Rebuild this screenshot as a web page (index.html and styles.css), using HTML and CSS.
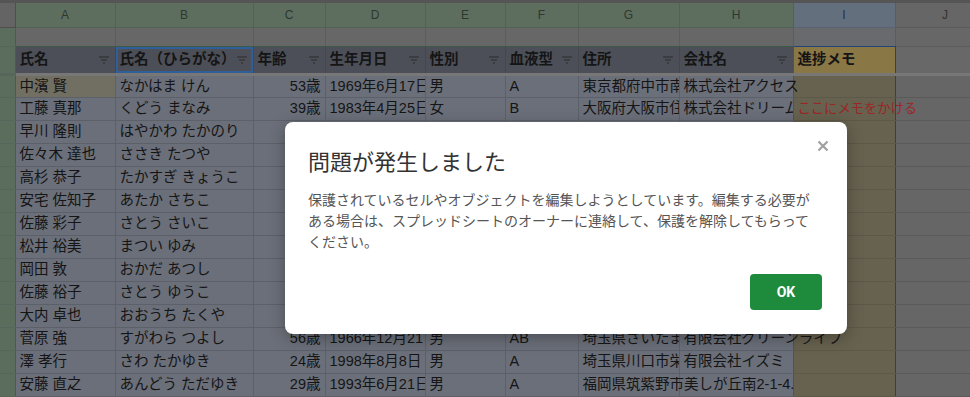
FILE: index.html
```html
<!DOCTYPE html>
<html lang="ja">

<head>
    <meta charset="UTF-8">
    <meta name="viewport" content="width=device-width, initial-scale=1.0">
    <title>顧客リスト</title>
    <link rel="stylesheet" href="styles.css">
</head>

<body>
    <div class="page">
        <table class="sheet">
            <colgroup>
                <col class="w-rh">
                <col class="w-a">
                <col class="w-b">
                <col class="w-c">
                <col class="w-d">
                <col class="w-e">
                <col class="w-f">
                <col class="w-g">
                <col class="w-h">
                <col class="w-i">
                <col class="w-j">
            </colgroup>
            <tr class="letters">
                <td class="corner"></td>
                <td>A</td><td>B</td><td>C</td><td>D</td><td>E</td><td>F</td><td>G</td><td>H</td>
                <td class="sel">I</td>
                <td class="plain">J</td>
            </tr>
            <tr class="blank">
                <td class="rh"></td>
                <td></td><td></td><td></td><td></td><td></td><td></td><td></td><td></td><td></td><td></td>
            </tr>
            <tr class="hdr">
                <td class="rh"></td>
                <td><div class="hc"><span>氏名</span><svg class="flt" viewBox="0 0 12 10"><path d="M1 2h10M3 5h6M5 8h2"/></svg></div></td>
                <td class="cur"><div class="hc"><span>氏名（ひらがな）</span><svg class="flt" viewBox="0 0 12 10"><path d="M1 2h10M3 5h6M5 8h2"/></svg></div></td>
                <td><div class="hc"><span>年齢</span><svg class="flt" viewBox="0 0 12 10"><path d="M1 2h10M3 5h6M5 8h2"/></svg></div></td>
                <td><div class="hc"><span>生年月日</span><svg class="flt" viewBox="0 0 12 10"><path d="M1 2h10M3 5h6M5 8h2"/></svg></div></td>
                <td><div class="hc"><span>性別</span><svg class="flt" viewBox="0 0 12 10"><path d="M1 2h10M3 5h6M5 8h2"/></svg></div></td>
                <td><div class="hc"><span>血液型</span><svg class="flt" viewBox="0 0 12 10"><path d="M1 2h10M3 5h6M5 8h2"/></svg></div></td>
                <td><div class="hc"><span>住所</span><svg class="flt" viewBox="0 0 12 10"><path d="M1 2h10M3 5h6M5 8h2"/></svg></div></td>
                <td><div class="hc"><span>会社名</span><svg class="flt" viewBox="0 0 12 10"><path d="M1 2h10M3 5h6M5 8h2"/></svg></div></td>
                <td class="memo">進捗メモ</td>
                <td class="plain"></td>
            </tr>
            <tr>
                <td class="rh"></td>
                <td class="act">中濱 賢</td><td>なかはま けん</td><td class="num">53歳</td><td>1969年6月17日</td><td>男</td><td>A</td><td>東京都府中市南町3-12-5</td><td class="spill">株式会社アクセス</td><td class="m"></td><td class="x"></td>
            </tr>
            <tr>
                <td class="rh"></td>
                <td>工藤 真那</td><td>くどう まなみ</td><td class="num">39歳</td><td>1983年4月25日</td><td>女</td><td>B</td><td>大阪府大阪市住之江区1-2</td><td>株式会社ドリームワークス</td><td class="m spill"><span class="note">ここにメモをかける</span></td><td class="x"></td>
            </tr>
            <tr>
                <td class="rh"></td>
                <td>早川 隆則</td><td>はやかわ たかのり</td><td></td><td></td><td></td><td></td><td></td><td></td><td class="m"></td><td class="x"></td>
            </tr>
            <tr>
                <td class="rh"></td>
                <td>佐々木 達也</td><td>ささき たつや</td><td></td><td></td><td></td><td></td><td></td><td></td><td class="m"></td><td class="x"></td>
            </tr>
            <tr>
                <td class="rh"></td>
                <td>高杉 恭子</td><td>たかすぎ きょうこ</td><td></td><td></td><td></td><td></td><td></td><td></td><td class="m"></td><td class="x"></td>
            </tr>
            <tr>
                <td class="rh"></td>
                <td>安宅 佐知子</td><td>あたか さちこ</td><td></td><td></td><td></td><td></td><td></td><td></td><td class="m"></td><td class="x"></td>
            </tr>
            <tr>
                <td class="rh"></td>
                <td>佐藤 彩子</td><td>さとう さいこ</td><td></td><td></td><td></td><td></td><td></td><td></td><td class="m"></td><td class="x"></td>
            </tr>
            <tr>
                <td class="rh"></td>
                <td>松井 裕美</td><td>まつい ゆみ</td><td></td><td></td><td></td><td></td><td></td><td></td><td class="m"></td><td class="x"></td>
            </tr>
            <tr>
                <td class="rh"></td>
                <td>岡田 敦</td><td>おかだ あつし</td><td></td><td></td><td></td><td></td><td></td><td></td><td class="m"></td><td class="x"></td>
            </tr>
            <tr>
                <td class="rh"></td>
                <td>佐藤 裕子</td><td>さとう ゆうこ</td><td></td><td></td><td></td><td></td><td></td><td></td><td class="m"></td><td class="x"></td>
            </tr>
            <tr>
                <td class="rh"></td>
                <td>大内 卓也</td><td>おおうち たくや</td><td></td><td></td><td></td><td></td><td></td><td></td><td class="m"></td><td class="x"></td>
            </tr>
            <tr>
                <td class="rh"></td>
                <td>菅原 強</td><td>すがわら つよし</td><td class="num">56歳</td><td>1966年12月21日</td><td>男</td><td>AB</td><td>埼玉県さいたま市浦和区</td><td class="spill">有限会社グリーンライフ</td><td class="m"></td><td class="x"></td>
            </tr>
            <tr>
                <td class="rh"></td>
                <td>澤 孝行</td><td>さわ たかゆき</td><td class="num">24歳</td><td>1998年8月8日</td><td>男</td><td>A</td><td>埼玉県川口市栄町</td><td>有限会社イズミ</td><td class="m"></td><td class="x"></td>
            </tr>
            <tr>
                <td class="rh"></td>
                <td>安藤 直之</td><td>あんどう ただゆき</td><td class="num">29歳</td><td>1993年6月21日</td><td>男</td><td>A</td><td class="spill"><div class="clip">福岡県筑紫野市美しが丘南2-1-4.5</div></td><td></td><td class="m"></td><td class="x"></td>
            </tr>
        </table>

        <div class="dialog" role="dialog">
            <button class="close" aria-label="閉じる">
                <svg viewBox="0 0 12 12"><path d="M1.5 1.5l9 9M10.5 1.5l-9 9"/></svg>
            </button>
            <h2 class="dialog-title">問題が発生しました</h2>
            <p class="dialog-msg">保護されているセルやオブジェクトを編集しようとしています。編集する必要がある場合は、スプレッドシートのオーナーに連絡して、保護を解除してもらってください。</p>
            <div class="dialog-actions">
                <button class="btn-ok">OK</button>
            </div>
        </div>
    </div>
</body>

</html>
```

FILE: styles.css
```css
* {
    box-sizing: border-box;
}

body {
    margin: 0;
    background: #555555;
    font-family: "Liberation Sans", "Noto Sans CJK JP", sans-serif;
}

.page {
    position: relative;
    width: 970px;
    height: 397px;
    padding-top: 3px;
    overflow: hidden;
}

/* spreadsheet */

.sheet {
    border-collapse: collapse;
    table-layout: fixed;
    width: 995px;
    font-size: 14.5px;
    color: #151515;
}

.w-rh { width: 15px; }
.w-a { width: 100px; }
.w-b { width: 138px; }
.w-c { width: 72px; }
.w-d { width: 100px; }
.w-e { width: 80px; }
.w-f { width: 73px; }
.w-g { width: 101px; }
.w-h { width: 114px; }
.w-i { width: 102px; }
.w-j { width: 100px; }

.sheet td {
    height: 23px;
    padding: 0 4px;
    white-space: nowrap;
    overflow: hidden;
    line-height: 1;
    background: #6b6f79;
    border-right: 1px solid #5c6068;
    border-bottom: 1px solid #5c6068;
}

.sheet td.rh {
    padding: 0;
    background: #5b6d5d;
    border-right-color: #4d5a4f;
    border-bottom-color: #56665a;
}

.sheet td.num {
    text-align: right;
}

.sheet td.act {
    background: #716f62;
}

.sheet td.m {
    background: #67624f;
    border-bottom-color: #5d5948;
}

.sheet td.x {
    background: #666666;
    border-bottom-color: #5a5a5a;
}

.sheet td.spill {
    overflow: visible;
}

.clip {
    width: 211px;
    overflow: hidden;
}

.note {
    font-size: 13.3px;
    color: #9a2626;
}

/* column letters */

.letters td {
    height: 24px;
    text-align: center;
    font-size: 12px;
    color: #2e382f;
    background: #5d6e5f;
    border-right-color: #526254;
    border-bottom-color: #526254;
}

.letters td.corner {
    background: #646464;
    border-right-color: #4e4e4e;
    border-bottom-color: #4e4e4e;
}

.letters td.sel {
    background: #646f7e;
    color: #2b313b;
    border-bottom-color: #5a6370;
}

.letters td.plain {
    background: #666666;
    color: #333333;
    border-bottom-color: #5a5a5a;
}

/* row 1 */

.blank td {
    height: 19px;
    background: #676767;
    border-right-color: #5c5c5c;
    border-bottom-color: #3f5a44;
}

.blank td:nth-child(10) {
    background: #686a6e;
    border-bottom-color: #24427a;
}

.blank td:nth-child(11) {
    border-bottom-color: #5c5c5c;
}

/* header row */

.hdr td {
    height: 28px;
    font-weight: bold;
    background: #4c4f57;
    border-right-color: #44474e;
    border-bottom: 3px solid #777777;
}

.hdr td.cur {
    box-shadow: inset 0 0 0 2px #2e5f9b;
}

.hdr td.memo {
    background: #8a7746;
}

.hdr td.plain {
    background: #686868;
}

.hc {
    display: flex;
    align-items: center;
    justify-content: space-between;
}

.flt {
    width: 12px;
    height: 10px;
    margin-right: 1px;
    fill: none;
    stroke: #2a2c30;
    stroke-width: 1.2;
}

/* column I outline */

.hdr td:nth-child(9),
.sheet tr:not(.letters):not(.blank) td:nth-child(9) {
    border-right-color: #2b6a3e;
}

.hdr td:nth-child(10),
.sheet tr:not(.letters):not(.blank) td:nth-child(10) {
    border-right-color: #24427a;
}

/* dialog */

.dialog {
    position: absolute;
    left: 285px;
    top: 122px;
    width: 562px;
    height: 212px;
    padding: 23px 24px 24px 23px;
    display: flex;
    flex-direction: column;
    background: #ffffff;
    border-radius: 8px;
    box-shadow: 0 4px 16px rgba(0, 0, 0, 0.3);
    font-family: "Noto Sans CJK JP", sans-serif;
}

.close {
    position: absolute;
    top: 16px;
    right: 16px;
    width: 16px;
    height: 16px;
    padding: 2px;
    border: none;
    background: none;
    cursor: pointer;
}

.close svg {
    display: block;
    width: 12px;
    height: 12px;
    fill: none;
    stroke: #a0a0a0;
    stroke-width: 2.2;
}

.dialog-title {
    margin: 0;
    font-size: 22px;
    font-weight: 400;
    line-height: 30px;
    color: #333333;
}

.dialog-msg {
    max-width: 508px;
    margin: 14px 0 0;
    font-size: 14px;
    line-height: 21px;
    color: #555555;
}

.dialog-actions {
    margin-top: auto;
    display: flex;
    justify-content: flex-end;
    padding-right: 1px;
}

.btn-ok {
    width: 72px;
    height: 36px;
    border: none;
    border-radius: 4px;
    background: #1e8a3c;
    color: #ffffff;
    font-family: Roboto, "Liberation Sans", sans-serif;
    font-size: 14px;
    font-weight: bold;
    cursor: pointer;
}
```
